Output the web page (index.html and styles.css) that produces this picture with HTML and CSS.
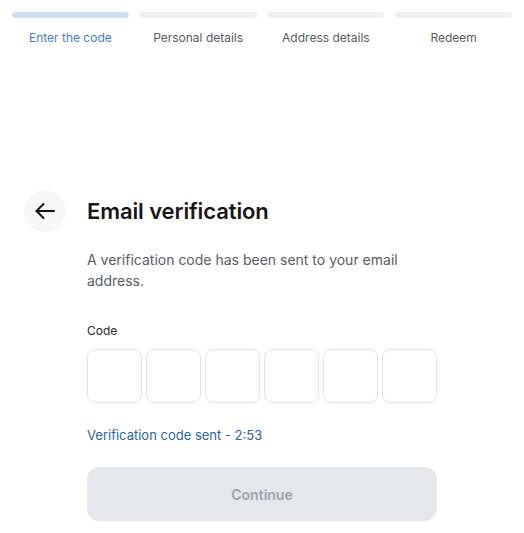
FILE: index.html
```html
<!DOCTYPE html>
<html lang="en">
<head>
<meta charset="utf-8">
<title>Email verification</title>
<link rel="stylesheet" href="styles.css">
</head>
<body>
<nav class="stepper">
  <div class="step active"><div class="bar"></div><span class="label">Enter the code</span></div>
  <div class="step"><div class="bar"></div><span class="label">Personal details</span></div>
  <div class="step"><div class="bar"></div><span class="label">Address details</span></div>
  <div class="step"><div class="bar"></div><span class="label">Redeem</span></div>
</nav>
<main class="page">
  <div class="head">
    <button class="back" aria-label="Back">
      <svg width="24" height="24" viewBox="0 0 24 24" fill="none" stroke="#111" stroke-width="2" stroke-linecap="round" stroke-linejoin="round"><path d="M21 12H3.5"/><path d="M10.5 5L3.5 12l7 7"/></svg>
    </button>
    <h1 class="title">Email verification</h1>
  </div>
  <div class="content">
    <p class="desc">A verification code has been sent to your email address.</p>
    <label class="field-label">Code</label>
    <div class="code">
      <input class="digit" maxlength="1">
      <input class="digit" maxlength="1">
      <input class="digit" maxlength="1">
      <input class="digit" maxlength="1">
      <input class="digit" maxlength="1">
      <input class="digit" maxlength="1">
    </div>
    <p class="sent">Verification code sent - 2:53</p>
    <button class="continue" disabled>Continue</button>
  </div>
</main>
</body>
</html>
```
FILE: styles.css
```css
* { box-sizing: border-box; }
html, body { margin: 0; background: #fff; }
body { font-family: Inter, "Noto Sans", sans-serif; color: #1a1a1a; }

.stepper {
  display: grid;
  grid-template-columns: repeat(4, 1fr);
  gap: 11px;
  padding: 12px 12px 0;
}
.step { display: flex; flex-direction: column; align-items: center; }
.bar { width: 100%; height: 6px; border-radius: 3px; background: #f0f0f0; }
.step.active .bar { background: #cfdff1; }
.label { margin-top: 12px; font-size: 12px; line-height: 16px; color: #585b60; }
.step.active .label { color: #4b7cbf; }

.page {
  display: grid;
  grid-template-columns: 1fr 350px 1fr;
  padding-top: 144px;
}
.head { display: contents; }
.back {
  grid-column: 1; grid-row: 1;
  justify-self: end; align-self: center;
  margin-right: 21px;
  width: 42px; height: 42px; border-radius: 50%;
  border: none; background: #f7f7f7; padding: 0;
  display: flex; align-items: center; justify-content: center;
}
.title {
  grid-column: 2; grid-row: 1;
  margin: 0; font-size: 22px; font-weight: 600; line-height: 42px;
  letter-spacing: -0.1px; color: #161616;
}
.content { grid-column: 2; grid-row: 2; display: flex; flex-direction: column; }
.desc { margin: 17px 0 0; font-size: 14px; line-height: 21px; color: #5a5d63; }
.field-label { margin-top: 32px; font-size: 12px; line-height: 16px; color: #2a2a2a; }
.code { display: grid; grid-template-columns: repeat(6, 1fr); gap: 4px; margin-top: 10px; }
.digit {
  height: 54px; width: 100%; border: 1px solid #e4e4e4; border-radius: 8px;
  background: #fff; font: inherit; text-align: center; font-size: 20px;
}
.sent { margin: 24px 0 0; font-size: 13px; line-height: 17px; color: #2b62a8; }
.continue {
  margin-top: 23px; height: 54px; width: 100%; border: none; border-radius: 12px;
  background: #e5e7eb; color: #9ca3af; font-family: inherit; font-size: 14px; font-weight: 600;
}
```
